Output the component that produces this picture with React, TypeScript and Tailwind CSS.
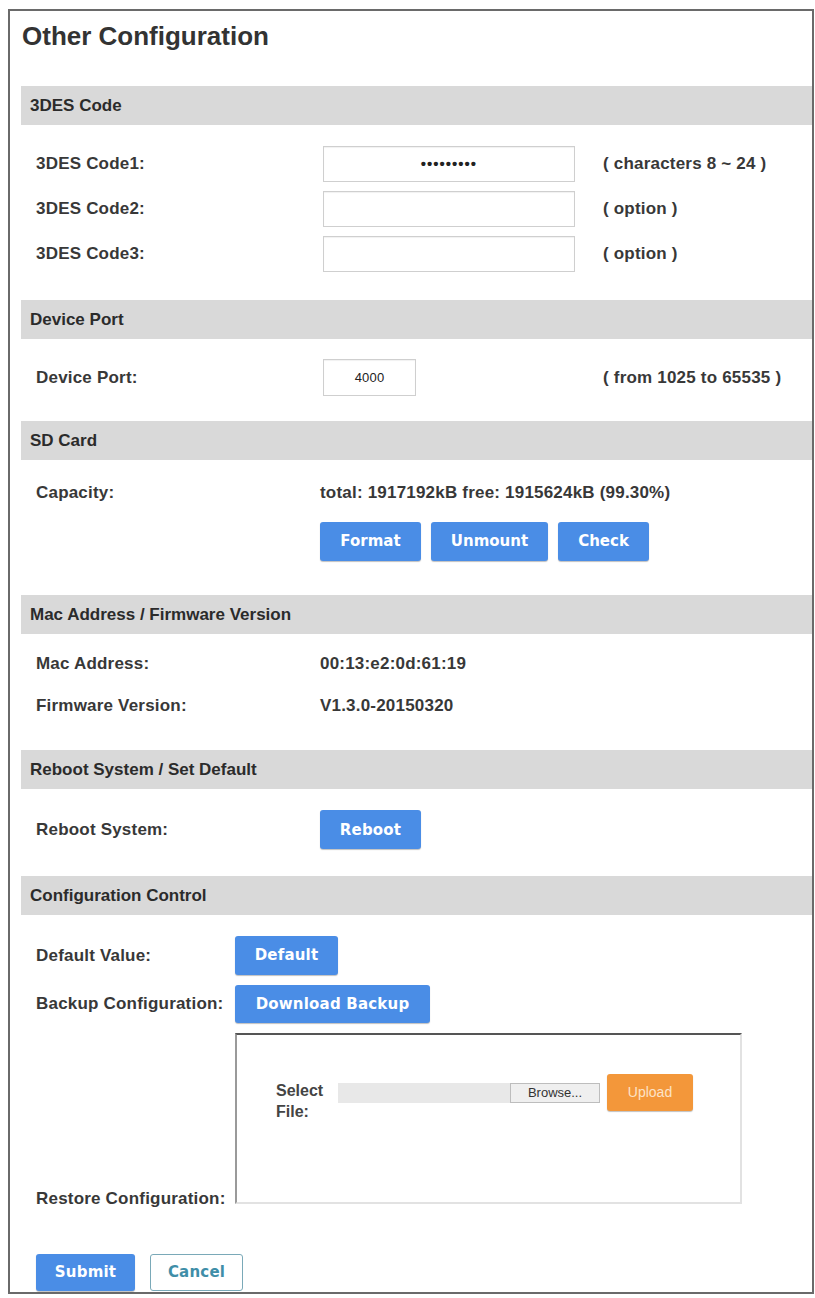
import { ReactNode } from "react"

const sans = { fontFamily: '"Liberation Sans", Arial, sans-serif' }

function Bar({ title }: { title: string }) {
  return (
    <div className="ml-[11px] h-[39px] bg-[#d9d9d9] flex items-center pl-[9px] text-[17px] font-bold text-[#2b2b2b]">
      {title}
    </div>
  )
}

function BlueButton({ children, className = "" }: { children: ReactNode; className?: string }) {
  return (
    <button
      type="button"
      className={`h-[39px] rounded-[3px] bg-[#4a8de6] text-white text-[15px] font-bold shadow-[0_1px_1px_rgba(0,0,0,0.25)] ${className}`}
      style={{ fontFamily: '"DejaVu Sans", Verdana, sans-serif' }}
    >
      {children}
    </button>
  )
}

function Row({ label, children, hint }: { label: string; children?: ReactNode; hint?: string }) {
  return (
    <div className="grid grid-cols-[284px_283px_1fr] items-center pl-[26px] leading-[24px] tracking-[0.2px]">
      <div className="text-[17px] font-bold text-[#383838]">{label}</div>
      <div className="flex items-center">{children}</div>
      <div className="text-[17px] font-bold text-[#383838]">{hint}</div>
    </div>
  )
}

function TextBox({ value = "", w = "w-[252px]", h = "h-[36px]", small = false }: { value?: string; w?: string; h?: string; small?: boolean }) {
  return (
    <div
      className={`ml-[3px] ${w} ${h} border border-[#cfcfcf] shadow-[inset_0_1px_1px_rgba(0,0,0,0.06)] bg-white flex items-center justify-center ${small ? "text-[13px] text-[#222]" : "text-[15px] font-bold tracking-[1px] text-[#222]"}`}
    >
      {value}
    </div>
  )
}

export default function App() {
  return (
    <div className="w-[815px] h-[1298px] bg-white pt-[9px] pl-[8px]" style={sans}>
      <div className="w-[806px] h-[1285px] border-2 border-[#6a6a6a]">
        <div className="pt-[9px] pl-[12px] h-[52px] text-[26px] leading-[32px] font-bold text-[#333]">Other Configuration</div>
        <div className="h-[23px]" />

        <Bar title="3DES Code" />
        <div className="pt-[21px] pb-[28px] flex flex-col gap-[9px]">
          <Row label="3DES Code1:" hint="( characters 8 ~ 24 )">
            <TextBox value="•••••••••" />
          </Row>
          <Row label="3DES Code2:" hint="( option )">
            <TextBox />
          </Row>
          <Row label="3DES Code3:" hint="( option )">
            <TextBox />
          </Row>
        </div>

        <Bar title="Device Port" />
        <div className="pt-[20px] pb-[25px]">
          <Row label="Device Port:" hint="( from 1025 to 65535 )">
            <TextBox value="4000" w="w-[93px]" h="h-[37px]" small />
          </Row>
        </div>

        <Bar title="SD Card" />
        <div className="pt-[20px] pb-[34px]">
          <Row label="Capacity:">
            <span className="h-[26px] leading-[26px] text-[17px] font-bold text-[#383838] whitespace-nowrap">
              total: 1917192kB free: 1915624kB (99.30%)
            </span>
          </Row>
          <div className="pl-[310px] mt-[16px] flex gap-[10px]">
            <BlueButton className="w-[101px]">Format</BlueButton>
            <BlueButton className="w-[117px]">Unmount</BlueButton>
            <BlueButton className="w-[91px]">Check</BlueButton>
          </div>
        </div>

        <Bar title="Mac Address / Firmware Version" />
        <div className="pt-[18px] pb-[32px] flex flex-col gap-[18px]">
          <Row label="Mac Address:">
            <span className="text-[17px] font-bold text-[#383838]">00:13:e2:0d:61:19</span>
          </Row>
          <Row label="Firmware Version:">
            <span className="text-[17px] font-bold text-[#383838]">V1.3.0-20150320</span>
          </Row>
        </div>

        <Bar title="Reboot System / Set Default" />
        <div className="pt-[21px] pb-[27px]">
          <Row label="Reboot System:">
            <BlueButton className="w-[101px]">Reboot</BlueButton>
          </Row>
        </div>

        <Bar title="Configuration Control" />
        <div className="pt-[21px] pl-[26px] flex flex-col gap-[10px] text-[17px] font-bold text-[#383838] tracking-[0.2px]">
          <div className="flex items-center">
            <div className="w-[199px]">Default Value:</div>
            <BlueButton className="w-[103px]">Default</BlueButton>
          </div>
          <div className="flex items-center">
            <div className="w-[199px]">Backup Configuration:</div>
            <BlueButton className="w-[195px] !h-[38px]">Download Backup</BlueButton>
          </div>
          <div className="flex items-end">
            <div className="w-[199px] leading-[17px] mb-[-3px]">Restore Configuration:</div>
            <div className="w-[507px] h-[171px] border-2 border-t-[#555] border-l-[#9a9a9a] border-r-[#e2e2e2] border-b-[#e2e2e2] pt-[39px] pl-[39px] flex items-start tracking-normal">
              <div className="w-[62px] mt-[6px] text-[16px] leading-[21px] font-bold text-[#444]">Select File:</div>
              <div className="mt-[9px] w-[262px] h-[20px] flex bg-[#e8e8e8]">
                <div className="flex-1" />
                <div className="w-[90px] h-full border border-[#bdbdbd] bg-[#efefef] text-[13px] font-normal text-[#333] flex items-center justify-center">
                  Browse...
                </div>
              </div>
              <button
                type="button"
                className="ml-[7px] w-[86px] h-[37px] rounded-[3px] bg-[#f3973a] text-[#fde3c6] text-[14px] font-normal shadow-[0_1px_1px_rgba(0,0,0,0.25)]"
              >
                Upload
              </button>
            </div>
          </div>
          <div className="mt-[40px] flex gap-[15px]">
            <BlueButton className="w-[99px] !h-[37px]">Submit</BlueButton>
            <button
              type="button"
              className="w-[93px] h-[37px] rounded-[3px] border border-[#7aa9b8] bg-white text-[#3f8ea8] text-[15px] font-bold"
              style={{ fontFamily: '"DejaVu Sans", Verdana, sans-serif' }}
            >
              Cancel
            </button>
          </div>
        </div>
      </div>
    </div>
  )
}
